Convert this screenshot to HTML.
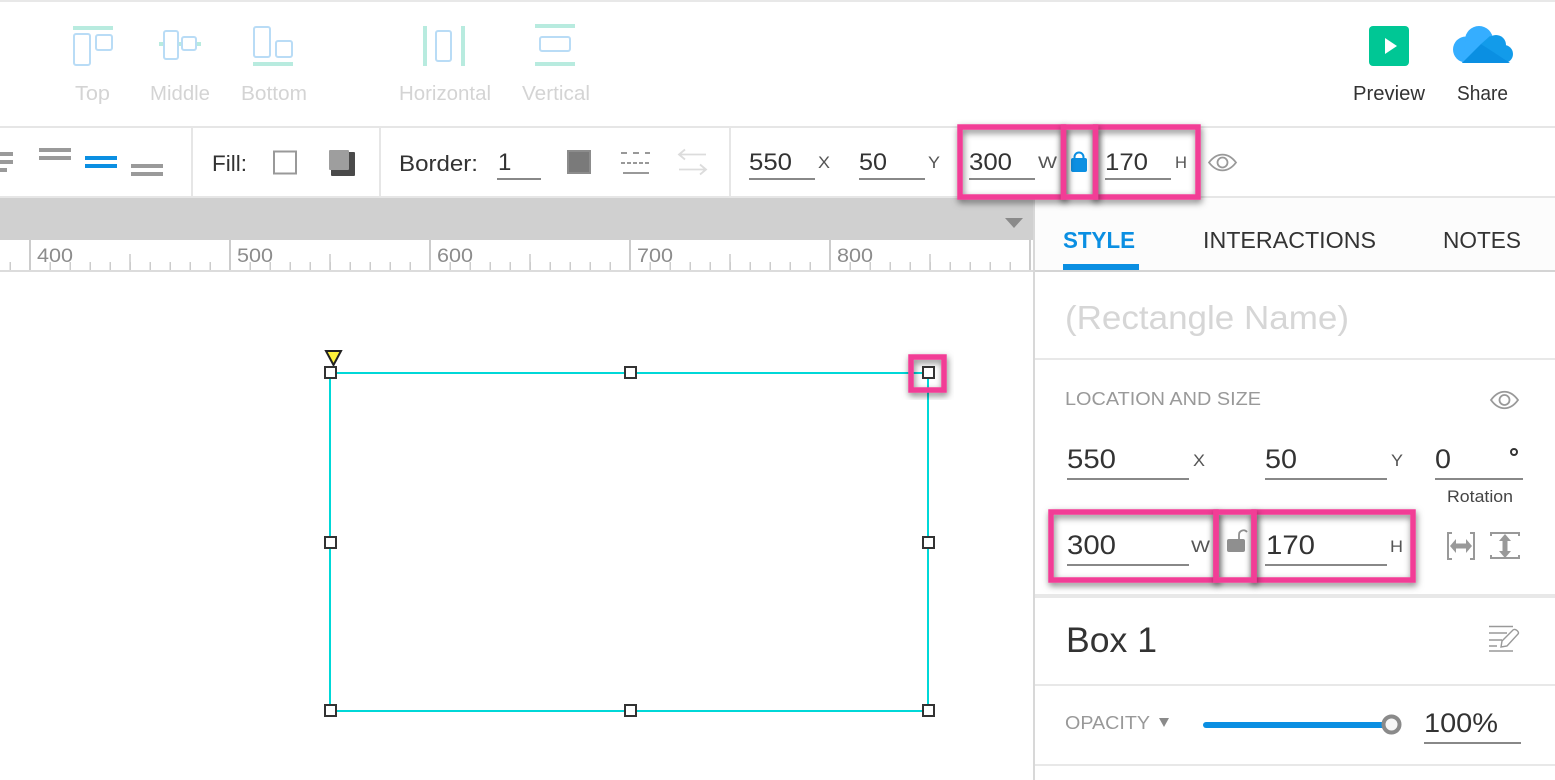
<!DOCTYPE html>
<html lang="en"><head><meta charset="utf-8"><title>Box properties</title>
<style>
html,body{margin:0;padding:0;background:#fff;width:1555px;height:780px;overflow:hidden}
svg{display:block;font-family:"Liberation Sans",sans-serif}
.lb{font-size:20px;fill:#d4d4d4}
.d{font-size:20px;fill:#333}
.n{font-size:24px;fill:#333}
.p{font-size:27px;fill:#333}
.s{font-size:17px;fill:#555}
.r{font-size:19px;fill:#8c8c8c}
.u{fill:#888}
.b{fill:#b8ebdf}
.i{fill:none;stroke:#b9dcf6;stroke-width:2}
.h{fill:#fff;stroke:#333;stroke-width:2}
.pk{fill:none;stroke:#f23d96;stroke-width:5.5;filter:url(#sh)}
</style></head><body>
<svg width="1555" height="780" viewBox="0 0 1555 780" xmlns="http://www.w3.org/2000/svg">
<defs><filter id="sh" x="-30%" y="-30%" width="160%" height="160%"><feDropShadow dx="1" dy="3" stdDeviation="3.500" flood-color="#000" flood-opacity=".5"/></filter></defs>
<rect width="1555" height="780" fill="#fff"/>
<rect width="1555" height="2" fill="#e8e8e8"/>
<rect y="126" width="1555" height="2" fill="#e6e6e6"/>
<rect y="196" width="1555" height="2" fill="#e6e6e6"/>
<rect y="198" width="1034" height="42" fill="#d0d0d0"/>
<rect x="1035" y="198" width="520" height="72" fill="#fcfcfc"/>

<!-- align icons -->
<rect class="b" x="73" y="26" width="40" height="4"/>
<rect class="i" x="74" y="34" width="16" height="31" rx="2"/><rect class="i" x="96" y="35" width="16" height="15" rx="2"/>
<rect class="b" x="159" y="42" width="42" height="4"/>
<rect x="164" y="31" width="14" height="28" rx="2" fill="#fff" stroke="#b9dcf6" stroke-width="2"/><rect x="182" y="37" width="14" height="13" rx="2" fill="#fff" stroke="#b9dcf6" stroke-width="2"/>
<rect class="i" x="254" y="27" width="16" height="30" rx="2"/><rect class="i" x="276" y="41" width="16" height="16" rx="2"/>
<rect class="b" x="253" y="62" width="40" height="4"/>
<rect class="b" x="423" y="26" width="4" height="40"/><rect class="b" x="461" y="26" width="4" height="40"/>
<rect class="i" x="436" y="31" width="15" height="30" rx="2"/>
<rect class="b" x="535" y="24" width="40" height="4"/><rect class="b" x="535" y="62" width="40" height="4"/>
<rect class="i" x="540" y="37" width="30" height="14" rx="2"/>
<text class="lb" x="75" y="100" textLength="35" lengthAdjust="spacingAndGlyphs">Top</text>
<text class="lb" x="150" y="100" textLength="60" lengthAdjust="spacingAndGlyphs">Middle</text>
<text class="lb" x="241" y="100" textLength="66" lengthAdjust="spacingAndGlyphs">Bottom</text>
<text class="lb" x="399" y="100" textLength="92" lengthAdjust="spacingAndGlyphs">Horizontal</text>
<text class="lb" x="522" y="100" textLength="68" lengthAdjust="spacingAndGlyphs">Vertical</text>

<!-- preview/share -->
<rect x="1369" y="26" width="40" height="40" rx="4" fill="#00c795"/>
<path d="M1385 38L1397 46L1385 54Z" fill="#fff"/>
<circle cx="1466" cy="49.500" r="13" fill="#35aeff"/>
<circle cx="1479" cy="40" r="14" fill="#35aeff"/>
<path d="M1462 63L1466 40L1481 44Z" fill="#35aeff"/>
<circle cx="1496" cy="45" r="10" fill="#129bea"/>
<circle cx="1504" cy="54" r="9" fill="#129bea"/>
<path d="M1481 44L1490 36L1505 45L1508 63Z" fill="#129bea"/>
<path d="M1462 63L1481 44L1510 63Z" fill="#0a8fe2"/>
<text class="d" x="1353" y="100" textLength="72" lengthAdjust="spacingAndGlyphs">Preview</text>
<text class="d" x="1457" y="100" textLength="51" lengthAdjust="spacingAndGlyphs">Share</text>

<!-- second row -->
<g fill="#9a9a9a">
<rect x="0" y="152" width="13" height="4"/><rect x="0" y="160" width="13" height="4"/><rect x="0" y="168" width="7" height="4"/>
<rect x="39" y="148" width="32" height="4"/><rect x="39" y="156" width="32" height="4"/>
<rect x="131" y="164" width="32" height="4"/><rect x="131" y="172" width="32" height="4"/>
</g>
<rect x="85" y="156" width="32" height="4" fill="#0b8fe2"/><rect x="85" y="164" width="32" height="4" fill="#0b8fe2"/>
<rect x="191" y="128" width="2" height="68" fill="#e6e6e6"/>
<rect x="379" y="128" width="2" height="68" fill="#e6e6e6"/>
<rect x="729" y="128" width="2" height="68" fill="#e6e6e6"/>
<text class="d" x="212" y="171" style="font-size:22px" textLength="35" lengthAdjust="spacingAndGlyphs">Fill:</text>
<rect x="274" y="151.500" width="22" height="22" fill="#fff" stroke="#999" stroke-width="2"/>
<rect x="331" y="152" width="24" height="24" fill="#4a4a4a" rx="1"/>
<rect x="329" y="150" width="20" height="20" fill="#9e9e9e" rx="1"/>
<text class="d" x="399" y="171" style="font-size:22px" textLength="79" lengthAdjust="spacingAndGlyphs">Border:</text>
<text class="n" x="498" y="170">1</text>
<rect class="u" x="497" y="178" width="44" height="2"/>
<rect x="568" y="151" width="22" height="22" fill="#7a7a7a" stroke="#8c8c8c" stroke-width="2"/>
<!-- dash icon -->
<path d="M621 153H650" stroke="#999" stroke-width="2" stroke-dasharray="6 6" fill="none"/>
<path d="M621 163H650" stroke="#999" stroke-width="2" stroke-dasharray="4 2" fill="none"/>
<rect x="623" y="172" width="26" height="2" fill="#999"/>
<path d="M706 154.500H679M685 149.500L679 154.500L685 159.500M679 169.500H706M700 164.500L706 169.500L700 174.500" fill="none" stroke="#dcdcdc" stroke-width="1.800"/>

<text class="n" x="749" y="170" textLength="43" lengthAdjust="spacingAndGlyphs">550</text>
<rect class="u" x="749" y="178" width="66" height="2"/>
<text class="s" x="818" y="168" textLength="12" lengthAdjust="spacingAndGlyphs">X</text>
<text class="n" x="859" y="170" textLength="28" lengthAdjust="spacingAndGlyphs">50</text>
<rect class="u" x="859" y="178" width="66" height="2"/>
<text class="s" x="928" y="168" textLength="12" lengthAdjust="spacingAndGlyphs">Y</text>
<text class="n" x="969" y="170" textLength="43" lengthAdjust="spacingAndGlyphs">300</text>
<rect class="u" x="969" y="178" width="66" height="2"/>
<text class="s" x="1038" y="168" textLength="19" lengthAdjust="spacingAndGlyphs">W</text>
<rect x="1071" y="158" width="16" height="14" rx="2" fill="#0b8fe2"/>
<path d="M1074.500 160V157a4.500 4.500 0 0 1 9 0V160" fill="none" stroke="#0b8fe2" stroke-width="2"/>
<text class="n" x="1105" y="170" textLength="43" lengthAdjust="spacingAndGlyphs">170</text>
<rect class="u" x="1105" y="178" width="66" height="2"/>
<text class="s" x="1175" y="168" textLength="12" lengthAdjust="spacingAndGlyphs">H</text>
<path d="M1209 162.500C1217 152 1228 152 1236 162.500C1228 173 1217 173 1209 162.500Z" fill="none" stroke="#999" stroke-width="1.800"/>
<circle cx="1222.500" cy="162.500" r="5" fill="none" stroke="#999" stroke-width="1.800"/>

<!-- ruler -->
<path d="M1005 218H1023L1014 228Z" fill="#8a8a8a"/>
<line x1="9.500" y1="266" x2="1030" y2="266" stroke="#ccc" stroke-dasharray="1.500 18.500" style="stroke-width:8px"/>
<path d="M130 254V270M330 254V270M530 254V270M730 254V270M930 254V270" stroke="#ccc" stroke-width="1.500" fill="none"/>
<path d="M30 240V270M230 240V270M430 240V270M630 240V270M830 240V270M1030 240V270" stroke="#ccc" stroke-width="2" fill="none"/>
<rect y="270" width="1034" height="2" fill="#dcdcdc"/>
<rect x="1034" y="270" width="521" height="2" fill="#d4d4d4"/>
<text class="r" x="37" y="262" textLength="36" lengthAdjust="spacingAndGlyphs">400</text>
<text class="r" x="237" y="262" textLength="36" lengthAdjust="spacingAndGlyphs">500</text>
<text class="r" x="437" y="262" textLength="36" lengthAdjust="spacingAndGlyphs">600</text>
<text class="r" x="637" y="262" textLength="36" lengthAdjust="spacingAndGlyphs">700</text>
<text class="r" x="837" y="262" textLength="36" lengthAdjust="spacingAndGlyphs">800</text>
<rect x="1033" y="198" width="2" height="582" fill="#d8d8d8"/>

<!-- tabs -->
<text x="1063" y="248" style="font-size:23px;font-weight:bold;fill:#0b8fe2" textLength="72" lengthAdjust="spacingAndGlyphs">STYLE</text>
<rect x="1063" y="264" width="76" height="6" fill="#0b8fe2"/>
<text x="1203" y="248" style="font-size:23px;fill:#333" textLength="173" lengthAdjust="spacingAndGlyphs">INTERACTIONS</text>
<text x="1443" y="248" style="font-size:23px;fill:#333" textLength="78" lengthAdjust="spacingAndGlyphs">NOTES</text>
<text x="1065" y="329" style="font-size:33px;fill:#d6d6d6" textLength="284" lengthAdjust="spacingAndGlyphs">(Rectangle Name)</text>
<rect x="1035" y="358" width="520" height="2" fill="#e8e8e8"/>

<!-- location and size -->
<text x="1065" y="405" style="font-size:18px;fill:#999" textLength="196" lengthAdjust="spacingAndGlyphs">LOCATION AND SIZE</text>
<path d="M1491 400C1499 389 1510 389 1518 400C1510 411 1499 411 1491 400Z" fill="none" stroke="#999" stroke-width="1.800"/>
<circle cx="1504.500" cy="400" r="5" fill="none" stroke="#999" stroke-width="1.800"/>
<text class="p" x="1067" y="468" textLength="49" lengthAdjust="spacingAndGlyphs">550</text>
<rect class="u" x="1067" y="478" width="122" height="2"/>
<text class="s" x="1193" y="466" textLength="12" lengthAdjust="spacingAndGlyphs">X</text>
<text class="p" x="1265" y="468" textLength="32" lengthAdjust="spacingAndGlyphs">50</text>
<rect class="u" x="1265" y="478" width="122" height="2"/>
<text class="s" x="1391" y="466" textLength="12" lengthAdjust="spacingAndGlyphs">Y</text>
<text class="p" x="1435" y="468" textLength="16" lengthAdjust="spacingAndGlyphs">0</text>
<circle cx="1514" cy="452" r="3" fill="none" stroke="#333" stroke-width="2"/>
<rect class="u" x="1435" y="478" width="88" height="2"/>
<text x="1447" y="502" style="font-size:17px;fill:#444" textLength="66" lengthAdjust="spacingAndGlyphs">Rotation</text>

<text class="p" x="1067" y="554" textLength="49" lengthAdjust="spacingAndGlyphs">300</text>
<rect class="u" x="1067" y="564" width="122" height="2"/>
<text class="s" x="1191" y="552" textLength="19" lengthAdjust="spacingAndGlyphs">W</text>
<rect x="1227" y="539" width="18" height="13" rx="2" fill="#8f8f8f"/>
<path d="M1239 539V535a4.500 4.500 0 0 1 8-3" fill="none" stroke="#8f8f8f" stroke-width="1.800"/>
<text class="p" x="1266" y="554" textLength="49" lengthAdjust="spacingAndGlyphs">170</text>
<rect class="u" x="1265" y="564" width="122" height="2"/>
<text class="s" x="1390" y="552" textLength="13" lengthAdjust="spacingAndGlyphs">H</text>
<!-- fit icons -->
<path d="M1452 533H1448V559H1452M1470 533H1474V559H1470" fill="none" stroke="#999" stroke-width="2"/>
<path d="M1450 546L1456 539V543.500H1466V539L1472 546L1466 553V548.500H1456V553Z" fill="#999"/>
<path d="M1491 536V533H1519V536M1491 555V558H1519V555" fill="none" stroke="#999" stroke-width="2"/>
<path d="M1505 534L1511 541H1507.500V551H1511L1505 558L1499 551H1502.500V541H1499Z" fill="#999"/>

<rect x="1035" y="594" width="520" height="4" fill="#e8e8e8"/>
<text x="1066" y="652" style="font-size:35px;fill:#333" textLength="91" lengthAdjust="spacingAndGlyphs">Box 1</text>
<path d="M1489 626.500H1513M1489 633H1507M1489 640H1502M1489 646H1497M1489 651H1513" stroke="#999" stroke-width="1.600" fill="none"/>
<path d="M1501 647L1502 641L1513 630C1515 628 1520 632 1518 634L1507 646Z" fill="#fff" stroke="#999" stroke-width="1.400"/>
<rect x="1035" y="684" width="520" height="2" fill="#e8e8e8"/>
<text x="1065" y="729" style="font-size:18px;fill:#999" textLength="85" lengthAdjust="spacingAndGlyphs">OPACITY</text>
<path d="M1159 718H1169L1164 727Z" fill="#8a8a8a"/>
<rect x="1203" y="722" width="186" height="6" rx="3" fill="#0b8fe2"/>
<circle cx="1391.500" cy="724.500" r="8" fill="#f6f6f6" stroke="#8a8a8a" stroke-width="4"/>
<text class="p" x="1424" y="732" textLength="74" lengthAdjust="spacingAndGlyphs">100%</text>
<rect class="u" x="1424" y="742" width="97" height="2"/>
<rect x="1035" y="764" width="520" height="2" fill="#e8e8e8"/>

<!-- canvas box -->
<rect x="330" y="373" width="598" height="338" fill="none" stroke="#00d8d8" stroke-width="2"/>
<path d="M326 351H341L333.500 365Z" fill="#fff23a" stroke="#222" stroke-width="2"/>
<rect class="h" x="325" y="367" width="11" height="11"/>
<rect class="h" x="625" y="367" width="11" height="11"/>
<rect class="h" x="325" y="537" width="11" height="11"/>
<rect class="h" x="923" y="537" width="11" height="11"/>
<rect class="h" x="325" y="705" width="11" height="11"/>
<rect class="h" x="625" y="705" width="11" height="11"/>
<rect class="h" x="923" y="705" width="11" height="11"/>

<!-- highlight boxes -->
<rect class="pk" x="911" y="357" width="33" height="33"/>
<rect class="h" x="923" y="367" width="11" height="11"/>
<rect class="pk" x="960" y="127" width="103.500" height="70"/>
<rect class="pk" x="1095.500" y="127" width="102.500" height="70"/>
<rect class="pk" x="1063.500" y="127" width="32" height="70"/>
<rect class="pk" x="1051" y="512" width="165" height="68"/>
<rect class="pk" x="1254" y="512" width="159" height="68"/>
<rect class="pk" x="1216" y="512" width="38" height="68"/>
</svg>
</body></html>
